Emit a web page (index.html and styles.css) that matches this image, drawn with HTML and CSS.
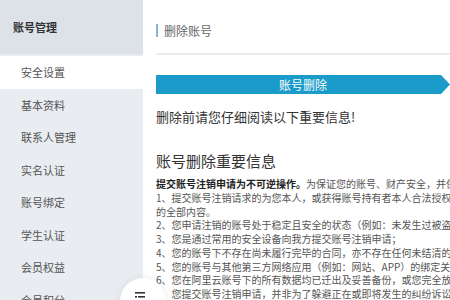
FILE: index.html
```html
<!DOCTYPE html>
<html lang="zh-CN">
<head>
<meta charset="utf-8">
<title>删除账号</title>
<link rel="stylesheet" href="styles.css">
</head>
<body>
<div class="layout">
  <aside class="sidebar">
    <div class="sidebar-head">账号管理</div>
    <ul class="menu">
      <li class="menu-item active">安全设置</li>
      <li class="menu-item">基本资料</li>
      <li class="menu-item">联系人管理</li>
      <li class="menu-item">实名认证</li>
      <li class="menu-item">账号绑定</li>
      <li class="menu-item">学生认证</li>
      <li class="menu-item">会员权益</li>
      <li class="menu-item">会员积分</li>
    </ul>
  </aside>
  <main class="main">
    <div class="page-head"><span class="page-title">删除账号</span></div>
    <div class="banner">账号删除</div>
    <p class="notice">删除前请您仔细阅读以下重要信息!</p>
    <h2 class="section-title">账号删除重要信息</h2>
    <div class="info">
      <p class="line"><b>提交账号注销申请为不可逆操作。</b>为保证您的账号、财产安全，并保障您的合法权益，请您在提交注销申请前确认</p>
      <p class="line">1、提交账号注销请求的为您本人，或获得账号持有者本人合法授权的人，且已经了解并同意注销账号</p>
      <p class="line">的全部内容。</p>
      <p class="line">2、您申请注销的账号处于稳定且安全的状态（例如：未发生过被盗、被封等情形）；</p>
      <p class="line">3、您是通过常用的安全设备向我方提交账号注销申请；</p>
      <p class="line">4、您的账号下不存在尚未履行完毕的合同，亦不存在任何未结清的款项；</p>
      <p class="line">5、您的账号与其他第三方网络应用（例如：网站、APP）的绑定关系已解除；</p>
      <p class="line">6、您在阿里云账号下的所有数据均已迁出及妥善备份，或您完全放弃这些数据；</p>
      <p class="line">7、您提交账号注销申请，并非为了躲避正在或即将发生的纠纷诉讼。</p>
    </div>
  </main>
</div>
<div class="float-btn">
  <svg class="float-icon" width="12" height="10" viewBox="0 0 12 10"><rect x="0" y="0" width="10" height="1.6" fill="#333"/><rect x="0" y="4" width="2" height="1.6" fill="#333"/><rect x="3" y="4" width="7" height="1.6" fill="#333"/></svg>
</div>
</body>
</html>
```

FILE: styles.css
```css
* { box-sizing: border-box; }
html, body { margin: 0; padding: 0; }
body {
  width: 450px;
  height: 300px;
  overflow: hidden;
  position: relative;
  background: #fff;
  font-family: "Noto Sans CJK SC", "Noto Sans", sans-serif;
  color: #444;
}
.layout { display: flex; height: 300px; }
.sidebar {
  width: 143px;
  flex-shrink: 0;
  background: #e9ecf1;
}
.sidebar-head {
  height: 54px;
  background: #dde2e9;
  display: flex;
  align-items: center;
  padding-left: 13px;
  font-size: 11px;
  font-weight: bold;
  color: #333;
}
.menu { list-style: none; margin: 0; padding: 2px 0 0; }
.menu-item {
  height: 32.5px;
  line-height: 32.5px;
  padding-left: 21px;
  font-size: 11px;
  color: #555;
}
.menu-item.active { background: #fff; }
.main {
  flex: 1;
  min-width: 0;
  padding-left: 13px;
  overflow: hidden;
}
.page-head {
  height: 55px;
  padding-top: 17px;
  border-bottom: 2px solid #ececec;
}
.page-title {
  display: inline-block;
  border-left: 2px solid #8db3d3;
  padding-left: 6px;
  line-height: 13px;
  font-size: 12px;
  color: #666;
}
.banner {
  margin-top: 20px;
  height: 19px;
  line-height: 19px;
  background: #1a9bc9;
  color: #fff;
  font-size: 12px;
  text-align: center;
  clip-path: polygon(0 0, calc(100% - 9px) 0, 100% 50%, calc(100% - 9px) 100%, 0 100%);
}
.notice {
  margin: 14px 0 0;
  font-size: 13px;
  line-height: 18px;
  color: #333;
  white-space: nowrap;
}
.section-title {
  margin: 25px 0 0;
  font-size: 15px;
  line-height: 20px;
  font-weight: normal;
  color: #333;
}
.info { margin-top: 6px; }
.line {
  margin: 0;
  font-size: 10px;
  line-height: 13.75px;
  white-space: nowrap;
  color: #555;
}
.line b { color: #222; }
.float-btn {
  position: absolute;
  left: 120px;
  top: 278px;
  width: 46px;
  height: 46px;
  border-radius: 50%;
  background: #fff;
  box-shadow: 0 0 8px rgba(0,0,0,0.08);
  padding: 14px 0 0 15px;
}
.float-icon { display: block; }
```
